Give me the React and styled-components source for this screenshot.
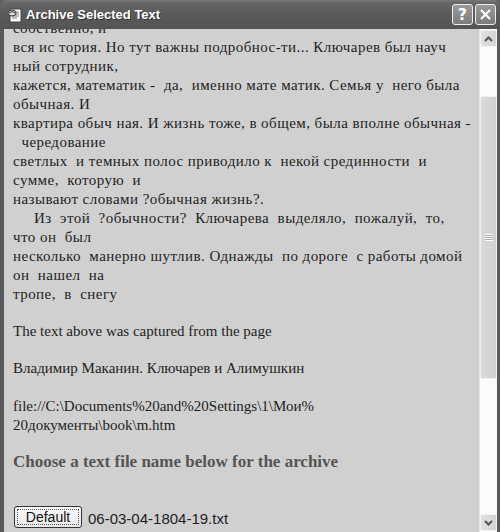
import React from "react";
import styled, { createGlobalStyle } from "styled-components";

const Global = createGlobalStyle`
  html, body { margin: 0; padding: 0; background: #d0d0d0; }
  body { width: 500px; height: 532px; overflow: hidden; }
`;

const Window = styled.div`
  width: 500px;
  height: 532px;
  display: flex;
  flex-direction: column;
  background: #5e5e5e;
  box-sizing: border-box;
  overflow: hidden;
`;

const TitleBar = styled.div`
  height: 29px;
  flex: none;
  display: flex;
  align-items: center;
  padding: 0 4px 0 7px;
  background: linear-gradient(#7a7a7a 0px, #666 3px, #5a5a5a 14px, #545454 28px);
  border-radius: 6px 6px 0 0;
`;

const AppIcon = styled.svg`
  width: 16px;
  height: 16px;
  flex: none;
`;

const Title = styled.div`
  flex: 1;
  margin-left: 3px;
  color: #fff;
  font-family: "Liberation Sans", Arial, sans-serif;
  font-weight: bold;
  font-size: 13px;
  text-shadow: 1px 1px 0 #333;
`;

const CaptionButton = styled.div`
  width: 21px;
  height: 21px;
  box-sizing: border-box;
  margin-left: 2px;
  border: 1px solid #eee;
  border-radius: 3px;
  background: linear-gradient(#9a9a9a, #7c7c7c);
  display: flex;
  align-items: center;
  justify-content: center;
  color: #fff;
  font-family: "DejaVu Sans", sans-serif;
  font-weight: bold;
  font-size: 16px;
`;

const Body = styled.div`
  flex: 1;
  display: flex;
  min-height: 0;
  border-left: 4px solid #5a5a5a;
  border-right: 3px solid #5a5a5a;
`;

const Content = styled.div`
  flex: 1;
  overflow: hidden;
  background: #d0d0d0;
  padding: 0 0 0 9px;
  display: flex;
  flex-direction: column;
`;

const Scrolled = styled.div`
  margin-top: -10px;
  display: flex;
  flex-direction: column;
`;

const Para = styled.p`
  margin: 0 0 ${(p) => p.$gap || 0}px 0;
  font-family: "Liberation Serif", "Times New Roman", serif;
  font-size: 15px;
  line-height: 19px;
  letter-spacing: ${(p) => (p.$wide ? "0.45px" : "normal")};
  color: #1e1e1e;
  white-space: pre-wrap;
`;

const Heading = styled.h3`
  margin: 16px 0 0 0;
  font-family: "Liberation Serif", "Times New Roman", serif;
  font-size: 17px;
  line-height: 22px;
  font-weight: bold;
  color: #555;
`;

const FileRow = styled.div`
  margin-top: 33px;
  display: flex;
  align-items: center;
  gap: 6px;
`;

const DefaultButton = styled.button`
  width: 68px;
  height: 22px;
  padding: 0;
  margin-left: 1px;
  background: linear-gradient(#fafafa, #e8e8e8);
  border: 1px solid #333;
  border-radius: 3px;
  outline: 1px dotted #555;
  outline-offset: -4px;
  font-family: "Liberation Sans", Arial, sans-serif;
  font-size: 14px;
  color: #111;
`;

const FileName = styled.span`
  font-family: "Liberation Sans", Arial, sans-serif;
  font-size: 15px;
  color: #1e1e1e;
  margin-top: 3px;
`;

const ScrollBar = styled.div`
  width: 17px;
  flex: none;
  display: flex;
  flex-direction: column;
  background: #fbfbfb;
  border-left: 1px solid #e8e8e8;
`;

const ArrowButton = styled.div`
  height: 17px;
  flex: none;
  box-sizing: border-box;
  margin: 1px 0;
  border: 1px solid #f4f4f4;
  border-radius: 2px;
  background: linear-gradient(90deg, #e0e0e0, #d4d4d4);
  display: flex;
  align-items: center;
  justify-content: center;
`;

const Track = styled.div`
  flex: 1;
  display: flex;
  flex-direction: column;
`;

const Thumb = styled.div`
  margin-top: ${(p) => p.$top}px;
  height: ${(p) => p.$height}px;
  box-sizing: border-box;
  border: 1px solid #f0f0f0;
  border-radius: 2px;
  background: linear-gradient(90deg, #dadada, #cfcfcf);
  display: flex;
  align-items: center;
  justify-content: center;
`;

const Grip = styled.div`
  width: 8px;
  height: 7px;
  background: repeating-linear-gradient(#fff 0 1px, #aaa 1px 2px);
`;

const Chevron = ({ up }) => (
  <svg width="9" height="6" viewBox="0 0 9 6">
    <path
      d={up ? "M1 5 L4.5 1.5 L8 5" : "M1 1 L4.5 4.5 L8 1"}
      fill="none"
      stroke="#555"
      strokeWidth="2"
    />
  </svg>
);

const lines = [
  "собственно, и",
  "вся ис тория. Но тут важны подробнос-ти... Ключарев был науч",
  "ный сотрудник,",
  "кажется, математик -  да,  именно мате матик. Семья у  него была",
  "обычная. И",
  "квартира обыч ная. И жизнь тоже, в общем, была вполне обычная -",
  "  чередование",
  "светлых  и темных полос приводило к  некой срединности  и",
  "сумме,  которую  и",
  "называют словами ?обычная жизнь?.",
  "     Из  этой  ?обычности?  Ключарева  выделяло,  пожалуй,  то,",
  "что он  был",
  "несколько  манерно шутлив. Однажды  по дороге  с работы домой",
  "он  нашел  на",
  "тропе,  в  снегу",
];

export default function App() {
  return (
    <>
      <Global />
      <Window>
        <TitleBar>
          <AppIcon viewBox="0 0 16 16">
            <rect x="3" y="2" width="11" height="13" fill="#fff" stroke="#444" />
            <path d="M5 5h7M5 7h7M5 9h7M5 11h5" stroke="#777" />
            <ellipse cx="5" cy="6" rx="4" ry="3" fill="#ddd" stroke="#333" />
            <path d="M2 6 Q5 3 8 6" stroke="#333" fill="none" />
          </AppIcon>
          <Title>Archive Selected Text</Title>
          <CaptionButton>?</CaptionButton>
          <CaptionButton>
            <svg width="13" height="13" viewBox="0 0 13 13">
              <path d="M2 2 L11 11 M11 2 L2 11" stroke="#fff" strokeWidth="2.2" />
            </svg>
          </CaptionButton>
        </TitleBar>
        <Body>
          <Content>
            <Scrolled>
              <Para $gap={18} $wide>{lines.join("\n")}</Para>
              <Para $gap={18}>The text above was captured from the page</Para>
              <Para $gap={19}>Владимир Маканин. Ключарев и Алимушкин</Para>
              <Para>
                {"file://C:\\Documents%20and%20Settings\\1\\Мои%\n20документы\\book\\m.htm"}
              </Para>
              <Heading>Choose a text file name below for the archive</Heading>
              <FileRow>
                <DefaultButton>Default</DefaultButton>
                <FileName>06-03-04-1804-19.txt</FileName>
              </FileRow>
            </Scrolled>
          </Content>
          <ScrollBar>
            <ArrowButton>
              <Chevron up />
            </ArrowButton>
            <Track>
              <Thumb $top={48} $height={283}>
                <Grip />
              </Thumb>
            </Track>
            <ArrowButton>
              <Chevron />
            </ArrowButton>
          </ScrollBar>
        </Body>
      </Window>
    </>
  );
}
